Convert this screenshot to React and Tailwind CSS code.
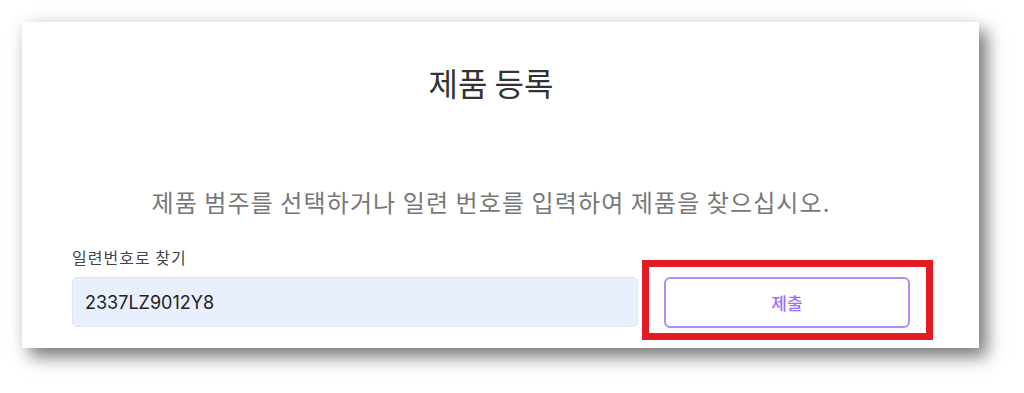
export default function App() {
  return (
    <div className="min-h-[393px] w-[1024px] bg-white pl-[22px] pt-[22px]" style={{ fontFamily: '"Noto Sans CJK KR", "Noto Sans", sans-serif' }}>
      <div className="flex h-[326px] w-[957px] flex-col bg-white pl-[50px] pr-[69px] pt-[40px] shadow-[8px_9px_16px_rgba(0,0,0,0.5),0_0_18px_rgba(0,0,0,0.07)]">
        <h1 className="text-center text-[32px] leading-[40px] font-normal text-[#333]">제품 등록</h1>
        <p className="mt-[84px] text-center text-[24px] leading-[32px] tracking-[1.1px] text-[#777]">
          제품 범주를 선택하거나 일련 번호를 입력하여 제품을 찾으십시오.
        </p>
        <label className="mt-[29px] text-[16px] leading-[20px] tracking-[1px] text-[#444]">일련번호로 찾기</label>
        <div className="mt-[10px] flex gap-[26px]">
          <input
            readOnly
            value="2337LZ9012Y8"
            className="h-[50px] w-[566px] rounded-[5px] border border-[#dfe4ec] bg-[#e8f0fe] px-[12px] text-[18px] text-[#222] outline-none"
            style={{ fontFamily: 'Inter, "Noto Sans", sans-serif' }}
          />
          <div className="relative">
            <button
              type="button"
              className="h-[51px] w-[246px] rounded-[6px] border-2 border-[#b28cff] bg-white text-[17px] font-medium text-[#9b6cff]"
            >
              제출
            </button>
            <div className="pointer-events-none absolute -left-[22px] -right-[23px] -top-[17px] -bottom-[12px] border-[7px] border-[#e31b23]" />
          </div>
        </div>
      </div>
    </div>
  );
}
